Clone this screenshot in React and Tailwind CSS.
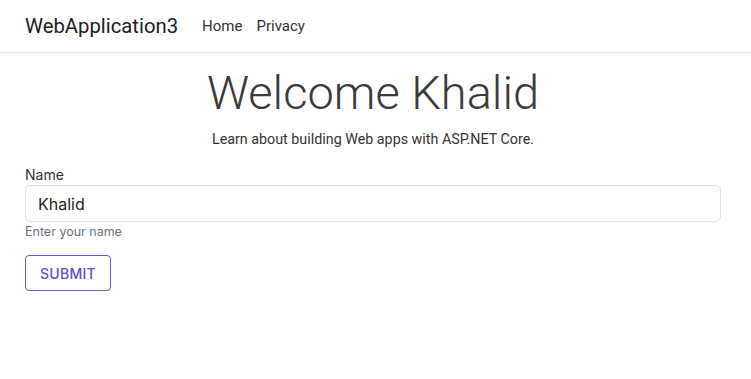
import React from 'react';

export default function App() {
    return (
        <div className="min-h-screen bg-white font-['Roboto',sans-serif]">
            <nav className="h-[53px] flex items-center px-[25px] border-b border-[#e5e5e5] shadow-[0_1px_3px_rgba(0,0,0,0.06)]">
                <span className="text-[20.3px] text-[#212121] mr-[24px]">WebApplication3</span>
                <div className="flex items-center gap-[14px] text-[15px] text-[#333]">
                    <span>Home</span>
                    <span>Privacy</span>
                </div>
            </nav>

            <main className="px-[25px]">
                <div className="text-center pr-[5px]">
                    <h1 className="text-[47px] font-light text-[#3b3b3b] leading-none pt-[16px]">Welcome Khalid</h1>
                    <p className="text-[14.3px] text-[#333] mt-[13px]">Learn about building Web apps with ASP.NET Core.</p>
                </div>

                <div className="mt-[15px] font-['Inter',sans-serif] w-[696px]">
                    <label className="block text-[14px] text-[#333] leading-[20px]">Name</label>
                    <div className="h-[37px] border border-[#dfe1e5] rounded-[5px] flex items-center px-[12px] text-[16px] text-[#222]">
                        Khalid
                    </div>
                    <div className="text-[12.5px] text-[#6b7280] mt-[1px]">Enter your name</div>
                    <button className="mt-[13px] w-[86px] h-[36px] border border-[#6a5cd8] rounded-[4px] text-[14px] tracking-[0.02em] font-medium text-[#5b4fd6]">
                        SUBMIT
                    </button>
                </div>
            </main>
        </div>
    );
}
